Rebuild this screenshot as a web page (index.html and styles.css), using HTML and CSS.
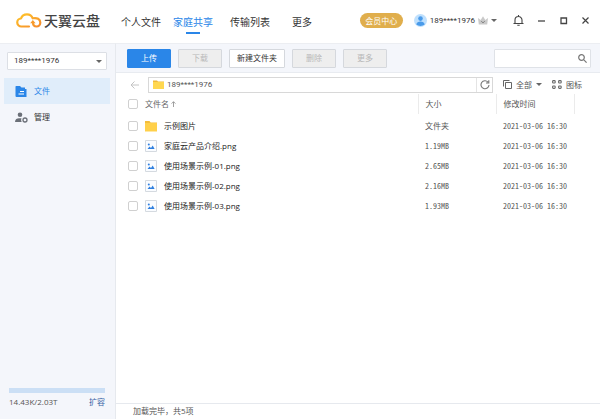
FILE: index.html
```html
<!DOCTYPE html>
<html lang="zh-CN">
<head>
    <meta charset="UTF-8">
    <title>天翼云盘</title>
    <link rel="stylesheet" href="styles.css">
</head>
<body>

<header class="topbar">
    <div class="logo">
        <svg width="26" height="16" viewBox="0 0 26 16" fill="none" stroke-width="2.2" stroke-linecap="round" stroke-linejoin="round">
            <defs>
                <linearGradient id="logo-color" x1="0" y1="0" x2="1" y2="1">
                    <stop offset="0" stop-color="#ffc629"/>
                    <stop offset="1" stop-color="#f58a2c"/>
                </linearGradient>
            </defs>
            <path stroke="url(#logo-color)" d="M13 13.500H5.500a4 4 0 0 1-.5-8C5.800 3 8 1.300 11 1.300c2.800 0 4.800 1.500 5.700 4 4.500-1 7.600 1 7.600 4.200 0 2.300-1.700 4-3.800 4-2.300 0-3.500-1.500-3.500-4"/>
            <path fill="#f79a2b" d="M16.800 7l2.800 3.200h-5.400z"/>
        </svg>
        <span>天翼云盘</span>
    </div>
    <nav class="nav">
        <a href="#">个人文件</a>
        <a href="#" class="active">家庭共享</a>
        <a href="#">传输列表</a>
        <a href="#">更多</a>
    </nav>
    <button type="button" class="vip">会员中心</button>
    <button type="button" class="user">
        <svg width="13" height="13" viewBox="0 0 13 13">
            <circle cx="6.500" cy="6.500" r="6.500" fill="#bfe0fd"/>
            <circle cx="6.500" cy="4.600" r="2.300" fill="#4a9bea"/>
            <path fill="#4a9bea" d="M2.300 10.600c.3-2.200 2-3.200 4.200-3.200s3.900 1 4.200 3.200c-2 1.700-6.400 1.700-8.400 0z"/>
        </svg>
        <span>189****1976</span>
        <svg width="10" height="9" viewBox="0 0 10 9">
            <path fill="#c9c9c9" d="M0 2l2.700 2L5 .3 7.300 4 10 2 9.200 8.600H.8z"/>
            <path fill="none" stroke="#888" d="M3.200 5L5 7l1.800-2"/>
        </svg>
        <i class="caret"></i>
    </button>
    <div class="window-buttons">
        <button type="button" aria-label="通知">
            <svg width="11" height="11" viewBox="0 0 11 11" fill="none" stroke="#444" stroke-width="1.100">
                <path d="M.5 8.500h10M2 8.500V5a3.500 3.500 0 0 1 7 0v3.500M5.500 0v1.500M4.300 10.200h2.400"/>
            </svg>
        </button>
        <button type="button" aria-label="最小化">
            <svg width="8" height="8" viewBox="0 0 8 8" stroke="#444" stroke-width="1.300"><path d="M0 4h7"/></svg>
        </button>
        <button type="button" aria-label="最大化">
            <svg width="8" height="8" viewBox="0 0 8 8" fill="none" stroke="#444" stroke-width="1.300"><path d="M1 1h5.500v5.500H1z"/></svg>
        </button>
        <button type="button" aria-label="关闭">
            <svg width="8" height="8" viewBox="0 0 8 8" stroke="#444" stroke-width="1.200"><path d="M.5 .5l6 6M6.500 .5l-6 6"/></svg>
        </button>
    </div>
</header>

<div class="content">
    <aside class="sidebar">
        <div class="account">
            <select aria-label="账号">
                <option>189****1976</option>
            </select>
            <i class="caret"></i>
        </div>
        <a href="#" class="side-item active">
            <svg width="13" height="11" viewBox="0 0 13 11">
                <path fill="#2a86e8" d="M1 0h4l1.500 1.500H10v1.500h1.500V11H1.500A1 1 0 0 1 .5 10V.5z"/>
                <path stroke="#fff" d="M5 5.500h4M3.500 8h5.500"/>
            </svg>
            <span>文件</span>
        </a>
        <a href="#" class="side-item">
            <svg width="13" height="11" viewBox="0 0 13 11">
                <circle cx="5" cy="2.800" r="2.300" fill="#6b7078"/>
                <path fill="#6b7078" d="M0 10c0-2.800 2-3.800 4-3.800h2.500C6 7.500 6 9 6.800 10z"/>
                <circle cx="10" cy="8" r="2" fill="none" stroke="#6b7078" stroke-width="1.300"/>
            </svg>
            <span>管理</span>
        </a>
        <div class="storage">
            <div class="storage-bar"></div>
            <div class="storage-info">
                <span>14.43K/2.03T</span>
                <a href="#">扩容</a>
            </div>
        </div>
    </aside>

    <main class="main">
        <div class="toolbar">
            <button type="button" class="btn primary">上传</button>
            <button type="button" class="btn" disabled>下载</button>
            <button type="button" class="btn">新建文件夹</button>
            <button type="button" class="btn" disabled>删除</button>
            <button type="button" class="btn" disabled>更多</button>
            <div class="search">
                <input type="text" aria-label="搜索">
                <svg width="9" height="9" viewBox="0 0 9 9" fill="none" stroke="#777" stroke-width="1.200">
                    <circle cx="3.500" cy="3.500" r="2.800"/><path d="M5.600 5.600l3 3"/>
                </svg>
            </div>
        </div>

        <div class="pathbar">
            <button type="button" class="back" aria-label="返回">
                <svg width="9" height="8" viewBox="0 0 9 8" fill="none" stroke="#c4c4c4"><path d="M9 4H1M4.500 .5L1 4l3.500 3.500"/></svg>
            </button>
            <div class="path">
                <svg width="11" height="9" viewBox="0 0 11 9"><path fill="#f0b93a" d="M0 .5h4l1 1h6V9H0z"/><path fill="#ffd750" d="M0 2h11v7H0z"/></svg>
                <input type="text" aria-label="路径" value="189****1976">
                <button type="button" aria-label="刷新">
                    <svg width="10" height="10" viewBox="0 0 10 10" fill="none" stroke="#777" stroke-width="1.100"><path d="M8 2.100A4 4 0 1 0 9 5M8.800 .3v2.700H6"/></svg>
                </button>
            </div>
            <button type="button" class="view">
                <svg width="9" height="9" viewBox="0 0 9 9" fill="none" stroke="#666"><path d="M2.500 2.500h6v6h-6zM.5 6.500v-6h6"/></svg>
                <span>全部</span>
                <i class="caret"></i>
            </button>
            <button type="button" class="view">
                <svg width="10" height="9" viewBox="0 0 10 9" fill="none" stroke="#666" stroke-width="1.100">
                    <rect x=".6" y=".6" width="2.600" height="2.400" rx=".8"/><rect x="6.600" y=".6" width="2.600" height="2.400" rx=".8"/>
                    <rect x=".6" y="6" width="2.600" height="2.400" rx=".8"/><rect x="6.600" y="6" width="2.600" height="2.400" rx=".8"/>
                </svg>
                <span>图标</span>
            </button>
        </div>

        <table class="files">
            <thead>
                <tr>
                    <th class="check"><input type="checkbox" aria-label="全选"></th>
                    <th>文件名 <svg class="sort" width="5" height="6" viewBox="0 0 5 6" fill="none" stroke="#888" stroke-width=".8"><path d="M2.500 6V.8M.6 2.600L2.500 .7l1.900 1.900"/></svg></th>
                    <th class="size">大小</th>
                    <th class="time">修改时间</th>
                    <th class="end"></th>
                </tr>
            </thead>
            <tbody>
                <tr>
                    <td class="check"><input type="checkbox" id="f1"></td>
                    <td><label for="f1"><svg width="12" height="12" viewBox="0 0 12 12"><path fill="#f3bd3c" d="M0 1h4.500l1.200 1.500H12V11H0z"/><path fill="#ffd04a" d="M0 3h12v8.500H0z"/></svg>示例图片</label></td>
                    <td class="size">文件夹</td>
                    <td class="time">2021-03-06 16:30</td>
                    <td></td>
                </tr>
                <tr>
                    <td class="check"><input type="checkbox" id="f2"></td>
                    <td><label for="f2"><svg width="12" height="12" viewBox="0 0 12 12"><path fill="#fafcff" stroke="#d5dae0" d="M.5 .5h11v11H.5z"/><circle cx="3.800" cy="4.400" r="1" fill="#2f80e0"/><path fill="#2f80e0" d="M2.500 9l2-2.500L6 8l1.700-2.500L9.600 9z"/></svg>家庭云产品介绍.png</label></td>
                    <td class="size mono">1.19MB</td>
                    <td class="time">2021-03-06 16:30</td>
                    <td></td>
                </tr>
                <tr>
                    <td class="check"><input type="checkbox" id="f3"></td>
                    <td><label for="f3"><svg width="12" height="12" viewBox="0 0 12 12"><path fill="#fafcff" stroke="#d5dae0" d="M.5 .5h11v11H.5z"/><circle cx="3.800" cy="4.400" r="1" fill="#2f80e0"/><path fill="#2f80e0" d="M2.500 9l2-2.500L6 8l1.700-2.500L9.600 9z"/></svg>使用场景示例-01.png</label></td>
                    <td class="size mono">2.65MB</td>
                    <td class="time">2021-03-06 16:30</td>
                    <td></td>
                </tr>
                <tr>
                    <td class="check"><input type="checkbox" id="f4"></td>
                    <td><label for="f4"><svg width="12" height="12" viewBox="0 0 12 12"><path fill="#fafcff" stroke="#d5dae0" d="M.5 .5h11v11H.5z"/><circle cx="3.800" cy="4.400" r="1" fill="#2f80e0"/><path fill="#2f80e0" d="M2.500 9l2-2.500L6 8l1.700-2.500L9.600 9z"/></svg>使用场景示例-02.png</label></td>
                    <td class="size mono">2.16MB</td>
                    <td class="time">2021-03-06 16:30</td>
                    <td></td>
                </tr>
                <tr>
                    <td class="check"><input type="checkbox" id="f5"></td>
                    <td><label for="f5"><svg width="12" height="12" viewBox="0 0 12 12"><path fill="#fafcff" stroke="#d5dae0" d="M.5 .5h11v11H.5z"/><circle cx="3.800" cy="4.400" r="1" fill="#2f80e0"/><path fill="#2f80e0" d="M2.500 9l2-2.500L6 8l1.700-2.500L9.600 9z"/></svg>使用场景示例-03.png</label></td>
                    <td class="size mono">1.93MB</td>
                    <td class="time">2021-03-06 16:30</td>
                    <td></td>
                </tr>
            </tbody>
        </table>

        <footer class="status">加载完毕，共5项</footer>
    </main>
</div>

</body>
</html>
```
FILE: styles.css
```css
* {
    box-sizing: border-box;
}

body {
    margin: 0;
    min-height: 100vh;
    display: flex;
    flex-direction: column;
    font-family: "Open Sans", "Noto Sans CJK SC", sans-serif;
    font-size: 8px;
    line-height: 12px;
    color: #333;
    background: #fff;
}

a {
    color: inherit;
    text-decoration: none;
}

button,
input,
select {
    font: inherit;
    color: inherit;
}

button {
    display: flex;
    align-items: center;
    justify-content: center;
    padding: 0;
    border: none;
    background: none;
    white-space: nowrap;
    cursor: pointer;
}

svg {
    display: block;
    flex: none;
}

.caret {
    border: 3px solid transparent;
    border-top-color: #666;
    border-bottom: none;
}

/* top bar */
.topbar {
    display: flex;
    align-items: center;
    height: 43px;
    padding: 0 10px 2px 16px;
}

.logo {
    display: flex;
    align-items: center;
    gap: 2px;
    font-size: 14px;
    line-height: 20px;
    font-weight: 500;
    color: #444;
}

.nav {
    display: flex;
    gap: 12px;
    margin: 2px 0 0 21px;
    font-size: 10px;
}

.nav a {
    position: relative;
    line-height: 24px;
}

.nav a:nth-child(3) {
    margin-left: 5px;
}

.nav a:nth-child(4) {
    margin-left: 10px;
}

.nav a.active {
    color: #2a86e8;
}

.nav a.active::after {
    content: "";
    position: absolute;
    left: 13px;
    right: 13px;
    bottom: 0;
    height: 2px;
    background: #2a86e8;
}

.vip {
    width: 43px;
    height: 15px;
    margin-left: auto;
    border-radius: 8px;
    background: #e0ae4c;
    color: #fff;
}

.user {
    gap: 3px;
    margin-left: 11px;
    font-family: Roboto, sans-serif;
}

.window-buttons {
    display: flex;
    align-items: center;
    gap: 14px;
    margin-left: 16px;
}

/* sidebar */
.content {
    flex: 1;
    display: flex;
}

.sidebar {
    width: 116px;
    display: flex;
    flex-direction: column;
    padding: 8px 5px 11px 4px;
    border-right: 1px solid #e6e9ee;
    border-top: 1px solid #eceef2;
    background: #f4f6fb;
}

.account {
    position: relative;
    margin: 0 3px 8px;
}

.account select {
    display: block;
    appearance: none;
    width: 100%;
    height: 18px;
    padding: 0 6px;
    border: 1px solid #dcdfe5;
    border-radius: 1px;
    background: #fff;
    font-family: Roboto, sans-serif;
}

.account .caret {
    position: absolute;
    right: 5px;
    top: 8px;
}

.side-item {
    display: flex;
    align-items: center;
    gap: 6px;
    height: 26px;
    padding-left: 11px;
}

.side-item.active {
    background: #e0edfa;
    color: #2a86e8;
}

.storage {
    margin: auto 5px 0;
}

.storage-bar {
    height: 5px;
    margin-bottom: 3px;
    background: #cbdff5;
}

.storage-info {
    display: flex;
    justify-content: space-between;
    color: #555;
}

.storage-info a {
    color: #3763a5;
}

/* main area */
.main {
    flex: 1;
    display: flex;
    flex-direction: column;
}

.toolbar {
    display: flex;
    align-items: center;
    gap: 7px;
    height: 30px;
    padding: 0 9px 0 11px;
    border-top: 1px solid #eceef2;
    border-bottom: 1px solid #e8ebf0;
    background: #f4f6fb;
}

.btn {
    min-width: 44px;
    height: 19px;
    padding: 0 7px;
    border: 1px solid #d5d8dd;
    border-radius: 1px;
    background: #fff;
}

.btn:disabled {
    background: #eee;
    color: #b8b8b8;
    cursor: default;
}

.btn.primary {
    border-color: #2a86e8;
    background: #2a86e8;
    color: #fff;
}

.search {
    display: flex;
    align-items: center;
    width: 97px;
    height: 19px;
    margin-left: auto;
    padding: 0 3px;
    border: 1px solid #dfe2e7;
    border-radius: 1px;
    background: #fff;
}

.search input,
.path input {
    flex: 1;
    min-width: 0;
    padding: 0;
    border: none;
    outline: none;
    background: none;
}

.pathbar {
    display: flex;
    align-items: center;
    height: 21px;
    padding: 2px 18px 0 14px;
    color: #555;
}

.path {
    flex: 1;
    display: flex;
    align-items: center;
    gap: 3px;
    height: 16px;
    margin-left: 9px;
    padding-left: 4px;
    border: 1px solid #d8d8d8;
}

.path input {
    font-family: Roboto, sans-serif;
}

.path button {
    width: 16px;
    height: 14px;
    border-left: 1px solid #e4e4e4;
}

.view {
    gap: 4px;
    margin-left: 10px;
}

/* file list */
.files {
    width: 100%;
    table-layout: fixed;
    border-collapse: collapse;
}

.files th,
.files td {
    height: 20px;
    padding: 0;
    text-align: left;
    font-weight: normal;
    white-space: nowrap;
}

.files th {
    color: #666;
}

.files thead::after {
    content: "";
    display: block;
    height: 2px;
}

.files .sort {
    display: inline-block;
}

.files .check {
    width: 29px;
    padding-left: 12px;
}

.files .size {
    width: 78px;
    padding-left: 7px;
    color: #555;
}

.files .time {
    width: 78px;
    padding-left: 7px;
    color: #555;
}

.files .end {
    width: 26px;
}

.files th.size,
.files th.time,
.files th.end {
    border-left: 1px solid #ebebeb;
}

.files td.time,
.files td.mono {
    font-family: "Noto Sans CJK SC", monospace;
    font-feature-settings: "hwid";
}

.files label {
    display: flex;
    align-items: center;
    gap: 7px;
    color: #222;
}

.files input {
    display: block;
    appearance: none;
    width: 10px;
    height: 10px;
    margin: 0;
    border: 1px solid #d0d0d0;
    border-radius: 2px;
    background: #fff;
}

.files input:checked {
    background: #2a86e8;
}

.status {
    margin-top: auto;
    height: 16px;
    padding: 1px 17px;
    border-top: 1px solid #e6e9ee;
    color: #555;
}
```
